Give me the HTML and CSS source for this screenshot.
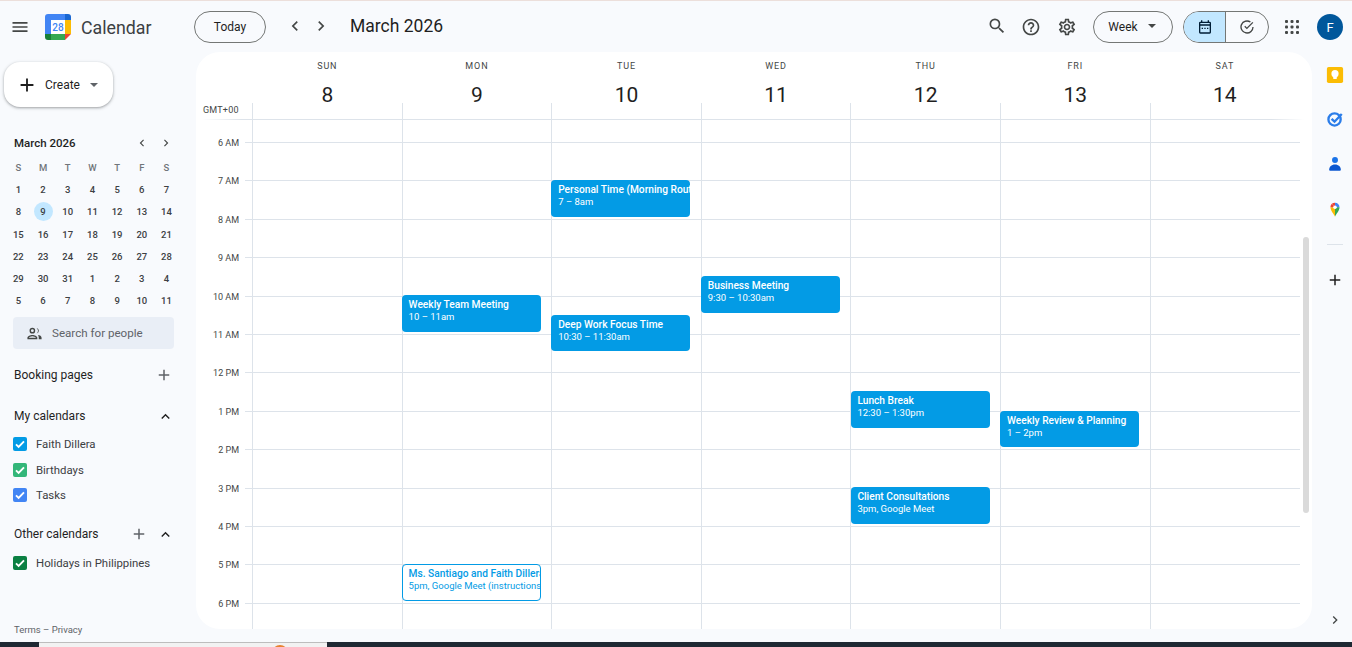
FILE: index.html
```html
<!DOCTYPE html>
<html lang="en">
<head>
<meta charset="utf-8">
<title>Calendar</title>
<link rel="stylesheet" href="styles.css">
</head>
<body>
<svg class="defs" aria-hidden="true">
  <symbol id="chev-l" viewBox="0 0 24 24"><path d="M15.4 7.4 14 6l-6 6 6 6 1.4-1.4L10.8 12z"/></symbol>
  <symbol id="chev-r" viewBox="0 0 24 24"><path d="M8.6 7.4 10 6l6 6-6 6-1.4-1.4L13.2 12z"/></symbol>
  <symbol id="plus" viewBox="0 0 24 24"><path d="M19 13h-6v6h-2v-6H5v-2h6V5h2v6h6z"/></symbol>
  <symbol id="up" viewBox="0 0 24 24"><path d="M7.4 15.4 6 14l6-6 6 6-1.4 1.4L12 10.8z"/></symbol>
  <symbol id="tick" viewBox="0 0 14 14"><path d="M3 7.4 5.6 10 11 4.4" fill="none" stroke="#fff" stroke-width="1.9"/></symbol>
</svg>

<div class="topline"></div>

<header class="header">
  <svg class="icon menu" viewBox="0 0 24 24"><path d="M3 18h18v-2H3v2zm0-5h18v-2H3v2zm0-7v2h18V6H3z"/></svg>
  <svg class="logo" viewBox="0 0 26 26">
    <path d="M6 0h14v6H6z" fill="#4285f4"/>
    <path d="M20 0h3a3 3 0 0 1 3 3v3h-6z" fill="#1967d2"/>
    <path d="M20 6h6v14h-6z" fill="#fbbc04"/>
    <path d="M6 20h14v6H6z" fill="#34a853"/>
    <path d="M0 20h6v6H3a3 3 0 0 1-3-3z" fill="#188038"/>
    <path d="M0 3a3 3 0 0 1 3-3h3v20H0z" fill="#4285f4"/>
    <path d="M20 20h6l-6 6z" fill="#ea4335"/>
    <rect x="6" y="6" width="14" height="14" fill="#fff"/>
    <text class="logo-num" x="13" y="17" text-anchor="middle">28</text>
  </svg>
  <span class="brand">Calendar</span>
  <button class="pill today">Today</button>
  <svg class="icon nav-prev lift" viewBox="0 0 24 24"><use href="#chev-l"/></svg>
  <svg class="icon nav-next lift" viewBox="0 0 24 24"><use href="#chev-r"/></svg>
  <h1 class="title lift">March 2026</h1>
  <svg class="icon search lift" viewBox="0 0 24 24"><path d="M15.5 14h-.79l-.28-.27A6.471 6.471 0 0 0 16 9.5 6.5 6.5 0 1 0 9.5 16c1.61 0 3.09-.59 4.23-1.57l.27.28v.79l5 4.99L20.49 19l-4.99-5zm-6 0C7.01 14 5 11.99 5 9.5S7.01 5 9.5 5 14 7.01 14 9.5 11.99 14 9.5 14z"/></svg>
  <svg class="icon help" viewBox="0 0 24 24"><path d="M11 18h2v-2h-2v2zm1-16C6.48 2 2 6.48 2 12s4.48 10 10 10 10-4.48 10-10S17.52 2 12 2zm0 18c-4.41 0-8-3.59-8-8s3.59-8 8-8 8 3.59 8 8-3.59 8-8 8zm0-14c-2.21 0-4 1.79-4 4h2c0-1.1.9-2 2-2s2 .9 2 2c0 2-3 1.75-3 5h2c0-2.25 3-2.5 3-5 0-2.21-1.79-4-4-4z"/></svg>
  <svg class="icon gear" viewBox="0 0 24 24"><path d="M19.43 12.98c.04-.32.07-.64.07-.98 0-.34-.03-.66-.07-.98l2.11-1.65c.19-.15.24-.42.12-.64l-2-3.46c-.09-.16-.26-.25-.44-.25-.06 0-.12.01-.17.03l-2.49 1c-.52-.4-1.08-.73-1.69-.98l-.38-2.65C14.46 2.18 14.25 2 14 2h-4c-.25 0-.46.18-.49.42l-.38 2.65c-.61.25-1.17.59-1.69.98l-2.49-1c-.06-.02-.12-.03-.18-.03-.17 0-.34.09-.43.25l-2 3.46c-.13.22-.07.49.12.64l2.11 1.65c-.04.32-.07.65-.07.98 0 .33.03.66.07.98l-2.11 1.65c-.19.15-.24.42-.12.64l2 3.46c.09.16.26.25.44.25.06 0 .12-.01.17-.03l2.49-1c.52.4 1.08.73 1.69.98l.38 2.65c.03.24.24.42.49.42h4c.25 0 .46-.18.49-.42l.38-2.65c.61-.25 1.17-.59 1.69-.98l2.49 1c.06.02.12.03.18.03.17 0 .34-.09.43-.25l2-3.46c.12-.22.07-.49-.12-.64l-2.11-1.65zm-1.98-1.71c.04.31.05.52.05.73 0 .21-.02.43-.05.73l-.14 1.13.89.7 1.08.84-.7 1.21-1.27-.51-1.04-.42-.9.68c-.43.32-.84.56-1.25.73l-1.06.43-.16 1.13-.2 1.35h-1.4l-.19-1.35-.16-1.13-1.06-.43c-.43-.18-.83-.41-1.23-.71l-.91-.7-1.06.43-1.27.51-.7-1.21 1.08-.84.89-.7-.14-1.13c-.03-.31-.05-.54-.05-.74s.02-.43.05-.73l.14-1.13-.89-.7-1.08-.84.7-1.21 1.27.51 1.04.42.9-.68c.43-.32.84-.56 1.25-.73l1.06-.43.16-1.13.2-1.35h1.39l.19 1.35.16 1.13 1.06.43c.43.18.83.41 1.23.71l.91.7 1.06-.43 1.27-.51.7 1.21-1.07.85-.89.7.14 1.13zM12 8c-2.21 0-4 1.79-4 4s1.79 4 4 4 4-1.79 4-4-1.79-4-4-4zm0 6c-1.1 0-2-.9-2-2s.9-2 2-2 2 .9 2 2-.9 2-2 2z"/></svg>
  <button class="pill week">Week<span class="caret"></span></button>
  <div class="toggle">
    <span class="seg seg-on">
      <svg class="seg-icon" viewBox="0 0 24 24"><path d="M19 4h-1V2h-2v2H8V2H6v2H5a2 2 0 0 0-2 2v14a2 2 0 0 0 2 2h14a2 2 0 0 0 2-2V6a2 2 0 0 0-2-2zm0 16H5V10h14v10zm0-12H5V6h14v2zM7 13h2v2H7zm4 0h2v2h-2zm4 0h2v2h-2z"/></svg>
    </span>
    <span class="seg">
      <svg class="seg-icon" viewBox="0 0 24 24"><path d="M12 20a8 8 0 1 1 4.4-14.7l1.4-1.4A10 10 0 1 0 22 12h-2a8 8 0 0 1-8 8z"/><path d="m7.9 11.6 1.4-1.4 2.5 2.5 8.3-8.3 1.4 1.4-9.7 9.700z"/></svg>
    </span>
  </div>
  <svg class="apps" viewBox="0 0 14 14">
    <rect x="0" y="0" width="3" height="3" rx="1"/><rect x="5.5" y="0" width="3" height="3" rx="1"/><rect x="11" y="0" width="3" height="3" rx="1"/>
    <rect x="0" y="5.5" width="3" height="3" rx="1"/><rect x="5.5" y="5.5" width="3" height="3" rx="1"/><rect x="11" y="5.5" width="3" height="3" rx="1"/>
    <rect x="0" y="11" width="3" height="3" rx="1"/><rect x="5.5" y="11" width="3" height="3" rx="1"/><rect x="11" y="11" width="3" height="3" rx="1"/>
  </svg>
  <span class="avatar">F</span>
</header>

<main class="main">
  <aside class="sidebar">
    <button class="create">
      <svg class="create-plus" viewBox="0 0 24 24"><use href="#plus"/></svg>
      <span>Create</span>
      <span class="caret"></span>
    </button>

    <div class="mini-head">
      <span class="mini-title">March 2026</span>
      <svg class="mini-nav" viewBox="0 0 24 24"><use href="#chev-l"/></svg>
      <svg class="mini-nav" viewBox="0 0 24 24"><use href="#chev-r"/></svg>
    </div>
    <div class="mini-grid">
      <span class="dow">S</span><span class="dow">M</span><span class="dow">T</span><span class="dow">W</span><span class="dow">T</span><span class="dow">F</span><span class="dow">S</span>
      <span>1</span><span>2</span><span>3</span><span>4</span><span>5</span><span>6</span><span>7</span>
      <span>8</span><span class="sel">9</span><span>10</span><span>11</span><span>12</span><span>13</span><span>14</span>
      <span>15</span><span>16</span><span>17</span><span>18</span><span>19</span><span>20</span><span>21</span>
      <span>22</span><span>23</span><span>24</span><span>25</span><span>26</span><span>27</span><span>28</span>
      <span>29</span><span>30</span><span>31</span><span>1</span><span>2</span><span>3</span><span>4</span>
      <span>5</span><span>6</span><span>7</span><span>8</span><span>9</span><span>10</span><span>11</span>
    </div>

    <div class="people">
      <svg class="people-icon" viewBox="0 0 24 24"><path d="M9 12a4 4 0 1 0 0-8 4 4 0 0 0 0 8zm0-6a2 2 0 1 1 0 4 2 2 0 0 1 0-4zm0 8c-3 0-7 1.500-7 4v2h14v-2c0-2.500-4-4-7-4zm-5 4c.2-.7 3-2 5-2s4.800 1.300 5 2H4zM15 4.100a4 4 0 0 1 0 7.800 5.500 5.500 0 0 0 0-7.800zM17 14.200c2.600.4 5 1.600 5 3.800v2h-4v-2c0-1.500-.4-2.800-1-3.800z"/></svg>
      <span>Search for people</span>
    </div>

    <div class="sec-row booking">
      <span class="sec-title">Booking pages</span>
      <svg class="sec-plus" viewBox="0 0 24 24"><use href="#plus"/></svg>
    </div>

    <div class="sec-row mycal">
      <span class="sec-title">My calendars</span>
      <svg class="sec-up" viewBox="0 0 24 24"><use href="#up"/></svg>
    </div>
    <div class="cal-item cal-first"><svg class="check c-blue" viewBox="0 0 14 14"><use href="#tick"/></svg><span>Faith Dillera</span></div>
    <div class="cal-item"><svg class="check c-green" viewBox="0 0 14 14"><use href="#tick"/></svg><span>Birthdays</span></div>
    <div class="cal-item"><svg class="check c-indigo" viewBox="0 0 14 14"><use href="#tick"/></svg><span>Tasks</span></div>

    <div class="sec-row othercal">
      <span class="sec-title">Other calendars</span>
      <svg class="sec-plus sec-plus-other" viewBox="0 0 24 24"><use href="#plus"/></svg>
      <svg class="sec-up" viewBox="0 0 24 24"><use href="#up"/></svg>
    </div>
    <div class="cal-item cal-first-other"><svg class="check c-dark" viewBox="0 0 14 14"><use href="#tick"/></svg><span>Holidays in Philippines</span></div>

    <div class="terms">Terms – Privacy</div>
  </aside>

  <section class="card">
    <div class="day-head">
      <div class="gmt">GMT+00</div>
      <div class="dh"><span class="dh-name">SUN</span><span class="dh-num">8</span></div>
      <div class="dh"><span class="dh-name">MON</span><span class="dh-num">9</span></div>
      <div class="dh"><span class="dh-name">TUE</span><span class="dh-num">10</span></div>
      <div class="dh"><span class="dh-name">WED</span><span class="dh-num">11</span></div>
      <div class="dh"><span class="dh-name">THU</span><span class="dh-num">12</span></div>
      <div class="dh"><span class="dh-name">FRI</span><span class="dh-num">13</span></div>
      <div class="dh"><span class="dh-name">SAT</span><span class="dh-num">14</span></div>
    </div>
    <div class="head-rule"></div>
    <div class="body">
      <div class="hour hour-first"><span class="hour-line hour-line-none"></span></div>
      <div class="hour"><span class="hour-label">6 AM</span><span class="hour-line"></span></div>
      <div class="hour"><span class="hour-label">7 AM</span><span class="hour-line"></span></div>
      <div class="hour"><span class="hour-label">8 AM</span><span class="hour-line"></span></div>
      <div class="hour"><span class="hour-label">9 AM</span><span class="hour-line"></span></div>
      <div class="hour"><span class="hour-label">10 AM</span><span class="hour-line"></span></div>
      <div class="hour"><span class="hour-label">11 AM</span><span class="hour-line"></span></div>
      <div class="hour"><span class="hour-label">12 PM</span><span class="hour-line"></span></div>
      <div class="hour"><span class="hour-label">1 PM</span><span class="hour-line"></span></div>
      <div class="hour"><span class="hour-label">2 PM</span><span class="hour-line"></span></div>
      <div class="hour"><span class="hour-label">3 PM</span><span class="hour-line"></span></div>
      <div class="hour"><span class="hour-label">4 PM</span><span class="hour-line"></span></div>
      <div class="hour"><span class="hour-label">5 PM</span><span class="hour-line"></span></div>
      <div class="hour"><span class="hour-label">6 PM</span><span class="hour-line"></span></div>

      <div class="days">
        <div class="day"></div>
        <div class="day">
          <div class="event" style="top:175px;height:37px"><b>Weekly Team Meeting</b><span>10 – 11am</span></div>
          <div class="event event-out" style="top:444px;height:37px"><b>Ms. Santiago and Faith Dillera</b><span>5pm, Google Meet (instructions)</span></div>
        </div>
        <div class="day">
          <div class="event" style="top:60px;height:37px"><b>Personal Time (Morning Routine)</b><span>7 – 8am</span></div>
          <div class="event" style="top:195px;height:36px"><b>Deep Work Focus Time</b><span>10:30 – 11:30am</span></div>
        </div>
        <div class="day">
          <div class="event" style="top:156px;height:37px"><b>Business Meeting</b><span>9:30 – 10:30am</span></div>
        </div>
        <div class="day day-thu">
          <div class="event" style="top:271px;height:37px"><b>Lunch Break</b><span>12:30 – 1:30pm</span></div>
          <div class="event" style="top:367px;height:37px"><b>Client Consultations</b><span>3pm, Google Meet</span></div>
        </div>
        <div class="day">
          <div class="event" style="top:291px;height:36px"><b>Weekly Review &amp; Planning</b><span>1 – 2pm</span></div>
        </div>
        <div class="day"></div>
      </div>
    </div>
    <div class="scrollbar"></div>
  </section>

  <aside class="rail">
    <svg class="rail-icon keep" viewBox="0 0 20 20">
      <rect x="1" y="1" width="18" height="18" rx="2" fill="#fbbc04"/>
      <circle cx="10" cy="8.500" r="4" fill="#fff"/>
      <rect x="8" y="11" width="4" height="3.500" rx="1" fill="#fff"/>
    </svg>
    <svg class="rail-icon tasks" viewBox="0 0 20 20">
      <circle cx="9.500" cy="10.500" r="6.800" fill="none" stroke="#2b7de9" stroke-width="2.600"/>
      <path d="m6.200 9.800 3.300 3.200 8-8.500" fill="none" stroke="#2b7de9" stroke-width="2.600"/>
    </svg>
    <svg class="rail-icon contacts" viewBox="0 0 20 20">
      <circle cx="10" cy="5.500" r="3.300" fill="#1a73e8"/>
      <path d="M3.500 16.500c0-3.500 2.500-6 6.500-6s6.500 2.500 6.500 6c0 .8-.5 1-1 1h-11c-.5 0-1-.2-1-1z" fill="#0b57d0"/>
    </svg>
    <svg class="rail-icon maps" viewBox="0 0 20 20">
      <path d="M10 18.500c-1-3-5-6-5-10.500h5z" fill="#fbbc04"/>
      <path d="M5 8c0-1.500.5-2.800 1.500-3.700L10 8z" fill="#ea4335"/>
      <path d="M6.500 4.300A5 5 0 0 1 10 3v5z" fill="#ea4335"/>
      <path d="M10 3a5 5 0 0 1 5 5h-5z" fill="#4285f4"/>
      <path d="M15 8c0 4.500-4 7.500-5 10.500V8z" fill="#34a853"/>
      <circle cx="10" cy="8" r="2" fill="#fff"/>
    </svg>
    <div class="rail-divider"></div>
    <svg class="rail-plus" viewBox="0 0 24 24"><use href="#plus"/></svg>
    <svg class="rail-chev" viewBox="0 0 24 24"><use href="#chev-r"/></svg>
  </aside>
</main>

<footer class="strip">
  <div class="strip-dark strip-a"></div>
  <div class="strip-light"><span class="strip-dot"></span></div>
  <div class="strip-dark strip-b"></div>
</footer>
</body>
</html>
```

FILE: styles.css
```css
* { box-sizing: border-box; }

html, body { height: 100%; }

body {
  margin: 0;
  height: 647px;
  overflow: hidden;
  display: flex;
  flex-direction: column;
  background: #f8fafd;
  color: #1f1f1f;
  font-family: Roboto, "Liberation Sans", sans-serif;
}

.defs { display: none; }

.topline { height: 1px; flex: none; background: #ecdfdb; }

/* Header */
.header {
  height: 51px;
  flex: none;
  display: flex;
  align-items: center;
  padding-top: 1px;
}

.icon { width: 20px; height: 20px; flex: none; fill: #444746; }
.lift { margin-bottom: 2px; }
.menu { margin-left: 10px; }

.logo { width: 26px; height: 26px; flex: none; margin-left: 15px; }
.logo-num { font: 500 10px Roboto, sans-serif; fill: #4285f4; }

.brand { margin-left: 10px; font-size: 17.800px; color: #3c4043; width: 72px; flex: none; }

.pill {
  height: 32px;
  border: 1px solid #747775;
  border-radius: 16px;
  background: transparent;
  font: 400 12px Roboto, sans-serif;
  color: #1f1f1f;
  display: flex;
  align-items: center;
  justify-content: center;
  padding: 0;
  flex: none;
}

.today { width: 72px; margin-left: 41px; }
.nav-prev { margin-left: 19px; }
.nav-next { margin-left: 6px; }
.title { margin: 0 0 2px 19px; font-size: 17.500px; font-weight: 400; color: #1f1f1f; width: 93px; flex: none; white-space: nowrap; }

.search { margin-left: 544px; }
.help { margin-left: 14px; }
.gear { margin-left: 16px; }

.week { width: 80px; margin-left: 16px; padding-right: 2px; }
.caret {
  width: 0;
  height: 0;
  border-left: 4px solid transparent;
  border-right: 4px solid transparent;
  border-top: 4px solid #444746;
  flex: none;
}
.week .caret { margin-left: 10px; margin-top: -2px; }

.toggle {
  width: 86px;
  height: 32px;
  flex: none;
  margin-left: 10px;
  display: flex;
  border: 1px solid #747775;
  border-radius: 16px;
  overflow: hidden;
}
.seg { flex: 1; display: flex; align-items: center; justify-content: center; }
.seg-on { background: #c2e7ff; border-right: 1px solid #747775; flex: none; width: 42px; }
.seg-icon { width: 16px; height: 16px; fill: #444746; }
.seg-on .seg-icon { fill: #001d35; }

.apps { width: 14px; height: 14px; flex: none; margin-left: 16px; fill: #444746; }

.avatar {
  width: 26px;
  height: 26px;
  flex: none;
  margin-left: 18px;
  border-radius: 50%;
  background: #01579b;
  color: #fff;
  font-size: 13px;
  display: flex;
  align-items: center;
  justify-content: center;
}

/* Main */
.main { height: 590px; flex: none; display: flex; }

.sidebar { width: 196px; flex: none; display: flex; flex-direction: column; }

.create {
  width: 109px;
  height: 45px;
  margin: 10px 0 0 4px;
  flex: none;
  display: flex;
  align-items: center;
  background: #fff;
  border: 0;
  border-radius: 16px;
  padding: 0;
  font: 400 12px Roboto, sans-serif;
  color: #1f1f1f;
  box-shadow: 0 1px 2px rgba(60, 64, 67, .3), 0 1px 3px 1px rgba(60, 64, 67, .15);
}
.create-plus { width: 22px; height: 22px; margin: 0 7px 0 12px; fill: #1f1f1f; flex: none; }
.create .caret { margin-left: 10px; border-top-color: #5f6368; }

.mini-head { display: flex; align-items: center; height: 18px; margin: 27px 0 0 14px; }
.mini-title { font-size: 11.500px; font-weight: 500; width: 121px; color: #1f1f1f; }
.mini-nav { width: 14px; height: 14px; fill: #444746; flex: none; }
.mini-nav + .mini-nav { margin-left: 10px; }

.mini-grid {
  display: grid;
  grid-template-columns: repeat(7, 24.700px);
  grid-auto-rows: 22.300px;
  margin: 4px 0 0 6px;
  font-size: 9.500px;
  font-weight: 500;
  color: #3c4043;
}
.mini-grid span { display: flex; align-items: center; justify-content: center; }
.mini-grid .dow { color: #70757a; font-weight: 500; }
.mini-grid .sel { position: relative; z-index: 0; }
.mini-grid .sel::before {
  content: "";
  position: absolute;
  z-index: -1;
  left: 3px;
  top: 1.500px;
  width: 19px;
  height: 19px;
  border-radius: 50%;
  background: #c2e7ff;
}

.people {
  width: 161px;
  height: 32px;
  margin: 5px 0 0 13px;
  flex: none;
  display: flex;
  align-items: center;
  background: #e9eef6;
  border-radius: 4px;
  font-size: 11.600px;
  color: #5f6368;
}
.people-icon { width: 17px; height: 17px; margin: 0 9px 0 13px; fill: #444746; flex: none; }

.sec-row { display: flex; align-items: center; height: 16px; margin-left: 14px; flex: none; }
.sec-title { font-size: 12px; font-weight: 400; color: #1f1f1f; }
.booking { margin-top: 18px; }
.mycal { margin-top: 25px; }
.othercal { margin-top: 18px; }
.sec-plus { width: 18px; height: 18px; fill: #5f6368; margin-left: auto; margin-right: 23px; flex: none; }
.sec-up { width: 17px; height: 17px; fill: #1f1f1f; margin-left: auto; margin-right: 22px; flex: none; }
.sec-plus-other { margin-right: 9px; }
.othercal .sec-up { margin-left: 0; }

.cal-item { display: flex; align-items: center; height: 25.500px; margin-left: 13px; font-size: 11.400px; color: #3c4043; flex: none; }
.cal-first { margin-top: 7.500px; }
.cal-first-other { margin-top: 8.500px; }
.check { width: 14px; height: 14px; margin-right: 9px; border-radius: 2px; flex: none; }
.c-blue { background: #039be5; }
.c-green { background: #33b679; }
.c-indigo { background: #4285f4; }
.c-dark { background: #0b8043; }

.terms { margin: auto 0 7px 14px; font-size: 9.500px; color: #5f6368; }

/* Card */
.card {
  width: 1116px;
  height: 577px;
  flex: none;
  position: relative;
  overflow: hidden;
  display: flex;
  flex-direction: column;
  background: #fff;
  border-radius: 24px;
}

.day-head {
  height: 67px;
  flex: none;
  display: grid;
  grid-template-columns: 56px repeat(7, 149.600px);
}
.gmt { align-self: end; padding: 0 0 4px 7px; font-size: 9px; color: #444746; letter-spacing: .2px; }
.dh { position: relative; display: flex; flex-direction: column; align-items: center; padding-left: 1px; }
.dh::before {
  content: "";
  position: absolute;
  left: 0;
  bottom: 0;
  height: 16px;
  border-left: 1px solid #dde3ea;
}
.dh-name { margin-top: 9px; font-size: 9px; font-weight: 400; letter-spacing: .9px; color: #444746; line-height: 11px; }
.dh-num { margin-top: 10px; font-size: 21px; line-height: 26px; color: #1f1f1f; }

.head-rule {
  height: 1px;
  flex: none;
  margin: 0 8px 0 6px;
  background: linear-gradient(90deg, transparent, #dde3ea 40px, #dde3ea 97%, transparent);
}

.body { position: relative; flex: 1; display: flex; flex-direction: column; }

.hour { height: 38.400px; flex: none; display: flex; padding-right: 12px; }
.hour-first { height: 22px; }
.hour-label {
  width: 43px;
  flex: none;
  margin-top: -6px;
  height: 12px;
  font-size: 9px;
  line-height: 14px;
  text-align: right;
  color: #444746;
}
.hour-line { flex: 1; margin-left: 6px; border-top: 1px solid #dde3ea; }
.hour-line-none { border-top: 0; }

.days {
  position: absolute;
  left: 56px;
  top: 0;
  bottom: 0;
  display: grid;
  grid-template-columns: repeat(7, 149.600px);
}
.day { position: relative; border-left: 1px solid #dde3ea; }

.event {
  position: absolute;
  left: -1px;
  width: 139px;
  padding: 4px 0 0 7px;
  overflow: hidden;
  border-radius: 4px;
  background: #039be5;
  color: #fff;
  font-size: 9.500px;
  line-height: 12px;
  white-space: nowrap;
}
.day-thu .event { left: 0; padding-left: 6px; }
.event b, .event span { display: block; }
.event b { font-size: 10.200px; font-weight: 500; }
.event-out { background: #fff; color: #039be5; border: 1px solid #039be5; padding: 3px 0 0 6px; }

.scrollbar {
  position: absolute;
  left: 1107px;
  top: 185px;
  width: 6px;
  height: 276px;
  border-radius: 3px;
  background: #dadada;
}

/* Right rail */
.rail { flex: 1; display: flex; flex-direction: column; align-items: center; padding-left: 6px; position: relative; }
.rail-icon { width: 18px; height: 18px; flex: none; }
.keep { margin-top: 14px; }
.tasks { margin-top: 25.500px; }
.contacts { margin-top: 27.500px; }
.maps { margin-top: 27px; }
.rail-divider { width: 16px; height: 1px; background: #dde3ea; margin-top: 26px; flex: none; }
.rail-plus { width: 18px; height: 18px; fill: #1f1f1f; margin-top: 26px; flex: none; }
.rail-chev { width: 16px; height: 16px; fill: #444746; margin-top: auto; margin-bottom: 14px; flex: none; }

/* Bottom strip */
.strip { height: 5px; flex: none; display: flex; overflow: hidden; }
.strip-dark { background: #1f2933; }
.strip-a { width: 39px; flex: none; }
.strip-b { flex: 1; }
.strip-light { width: 288px; flex: none; position: relative; background: #f2f2f2; border-top: 1px solid #bdbdbd; }
.strip-dot {
  position: absolute;
  left: 233px;
  top: 2px;
  width: 16px;
  height: 16px;
  border-radius: 50%;
  background: #e8812f;
}
```
